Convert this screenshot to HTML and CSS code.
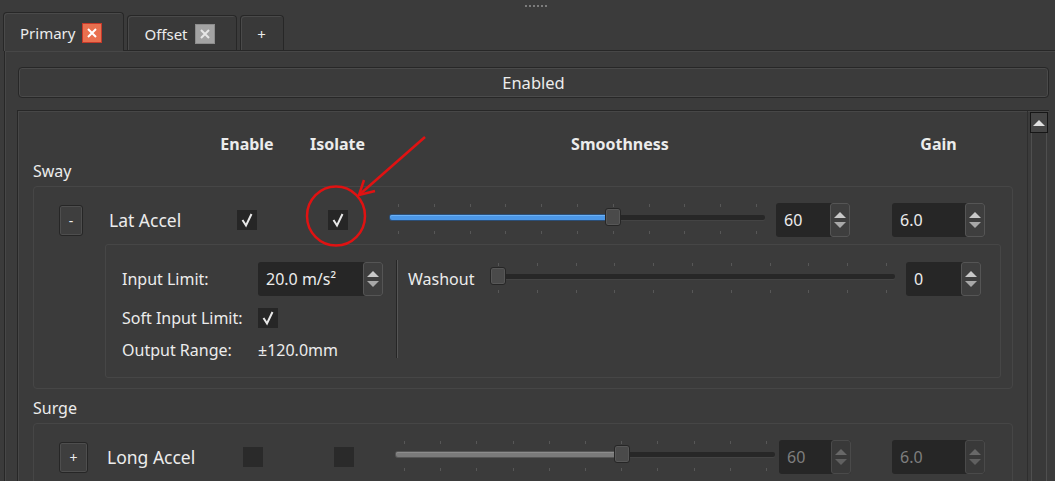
FILE: index.html
```html
<!DOCTYPE html>
<html lang="en">
<head>
    <meta charset="UTF-8">
    <title>Motion Filters</title>
    <link rel="stylesheet" href="styles.css">
</head>
<body>
    <div class="grip"><i></i><i></i><i></i><i></i><i></i><i></i></div>

    <div class="tabs">
        <div class="tab tab-active">
            <span>Primary</span>
            <svg class="tab-close" width="20" height="20" viewBox="0 0 20 20">
                <rect x="0.5" y="0.5" width="19" height="19" fill="#e9704f" stroke="#c6392a"/>
                <path d="M6 6 L14 14 M14 6 L6 14" stroke="#fff" stroke-width="2"/>
            </svg>
        </div>
        <div class="tab">
            <span>Offset</span>
            <svg class="tab-close" width="20" height="20" viewBox="0 0 20 20">
                <rect x="0.5" y="0.5" width="19" height="19" fill="#a3a3a3" stroke="#8c8c8c"/>
                <path d="M6 6 L14 14 M14 6 L6 14" stroke="#e6e6e6" stroke-width="2"/>
            </svg>
        </div>
        <div class="tab tab-add">+</div>
    </div>

    <div class="pane">
        <div class="toggle">Enabled</div>

        <div class="scroll-area">
            <div class="content">
                <div class="head">
                    <div class="c-btn"></div>
                    <div class="c-name"></div>
                    <div class="c-en">Enable</div>
                    <div class="c-iso">Isolate</div>
                    <div class="h-smooth">Smoothness</div>
                    <div class="c-gain">Gain</div>
                </div>

                <div class="section-label">Sway</div>
                <div class="group">
                    <div class="row">
                        <div class="c-btn"><div class="pm">-</div></div>
                        <div class="c-name">Lat Accel</div>
                        <div class="c-en"><div class="check"><svg width="20" height="20" viewBox="0 0 20 20"><path d="M5.5 10 L9 15.5 L14.5 4" fill="none" stroke="#e8e8e8" stroke-width="2"/></svg></div></div>
                        <div class="c-iso"><div class="check"><svg width="20" height="20" viewBox="0 0 20 20"><path d="M5.5 10 L9 15.5 L14.5 4" fill="none" stroke="#e8e8e8" stroke-width="2"/></svg></div></div>
                        <div class="c-slider">
                            <div class="slider">
                                <div class="ticks"><i></i><i></i><i></i><i></i><i></i><i></i><i></i><i></i><i></i><i></i><i></i></div>
                                <div class="groove">
                                    <div class="fill" style="width: calc((100% - 16px) * 0.6 + 8px)"></div>
                                    <div class="handle" style="left: calc((100% - 16px) * 0.6)"></div>
                                </div>
                                <div class="ticks"><i></i><i></i><i></i><i></i><i></i><i></i><i></i><i></i><i></i><i></i><i></i></div>
                            </div>
                        </div>
                        <div class="c-spin">
                            <div class="spin"><span class="spin-val">60</span><span class="spin-btns"><i class="up"></i><i class="down"></i></span></div>
                        </div>
                        <div class="c-gain">
                            <div class="spin"><span class="spin-val">6.0</span><span class="spin-btns"><i class="up"></i><i class="down"></i></span></div>
                        </div>
                    </div>

                    <div class="detail">
                        <div class="detail-left">
                            <div class="lrow lrow-first">
                                <span class="lbl">Input Limit:</span>
                                <div class="spin spin-wide"><span class="spin-val">20.0 m/s²</span><span class="spin-btns"><i class="up"></i><i class="down"></i></span></div>
                            </div>
                            <div class="lrow lrow-2">
                                <span class="lbl">Soft Input Limit:</span>
                                <div class="check"><svg width="20" height="20" viewBox="0 0 20 20"><path d="M5.5 10 L9 15.5 L14.5 4" fill="none" stroke="#e8e8e8" stroke-width="2"/></svg></div>
                            </div>
                            <div class="lrow lrow-3">
                                <span class="lbl">Output Range:</span>
                                <span>±120.0mm</span>
                            </div>
                        </div>
                        <div class="vsep"></div>
                        <div class="detail-right">
                            <span class="wash-lbl">Washout</span>
                            <div class="slider slider-wash">
                                <div class="ticks"><i></i><i></i><i></i><i></i><i></i><i></i><i></i><i></i><i></i><i></i><i></i></div>
                                <div class="groove">
                                    <div class="handle" style="left: 0"></div>
                                </div>
                                <div class="ticks"><i></i><i></i><i></i><i></i><i></i><i></i><i></i><i></i><i></i><i></i><i></i></div>
                            </div>
                            <div class="spin spin-wash"><span class="spin-val">0</span><span class="spin-btns"><i class="up"></i><i class="down"></i></span></div>
                        </div>
                    </div>
                </div>

                <div class="section-label section-label-2">Surge</div>
                <div class="group">
                    <div class="row row-wide row-off">
                        <div class="c-btn"><div class="pm">+</div></div>
                        <div class="c-name">Long Accel</div>
                        <div class="c-en"><div class="check"></div></div>
                        <div class="c-iso"><div class="check"></div></div>
                        <div class="c-slider">
                            <div class="slider">
                                <div class="ticks"><i></i><i></i><i></i><i></i><i></i><i></i><i></i><i></i><i></i><i></i><i></i></div>
                                <div class="groove">
                                    <div class="fill" style="width: calc((100% - 16px) * 0.6 + 8px)"></div>
                                    <div class="handle" style="left: calc((100% - 16px) * 0.6)"></div>
                                </div>
                                <div class="ticks"><i></i><i></i><i></i><i></i><i></i><i></i><i></i><i></i><i></i><i></i><i></i></div>
                            </div>
                        </div>
                        <div class="c-spin">
                            <div class="spin"><span class="spin-val">60</span><span class="spin-btns"><i class="up"></i><i class="down"></i></span></div>
                        </div>
                        <div class="c-gain">
                            <div class="spin"><span class="spin-val">6.0</span><span class="spin-btns"><i class="up"></i><i class="down"></i></span></div>
                        </div>
                    </div>
                </div>
            </div>

            <div class="scrollbar">
                <div class="sb-up"><i></i></div>
                <div class="sb-track"></div>
            </div>
        </div>
    </div>

    <!-- annotation drawn over the screenshot -->
    <svg class="markup" width="1055" height="481" viewBox="0 0 1055 481">
        <ellipse cx="336" cy="216" rx="29" ry="29.5" fill="none" stroke="#e01212" stroke-width="2.5"/>
        <path d="M425 137 L359 195" stroke="#e01212" stroke-width="2.5" fill="none"/>
        <path d="M375 191 L359 195 L364 180" stroke="#e01212" stroke-width="2.5" fill="none" stroke-linejoin="miter"/>
    </svg>
</body>
</html>
```

FILE: styles.css
```css
* {
    box-sizing: border-box;
}
html, body {
    margin: 0;
    height: 481px;
    overflow: hidden;
}
body {
    position: relative;
    background-color: #3b3b3b;
    color: #ececec;
    font-family: "Noto Sans", "Open Sans", sans-serif;
    font-size: 16px;
}

/* top grip */
.grip {
    height: 12px;
    display: flex;
    justify-content: center;
    align-items: center;
    gap: 2px;
    padding-left: 16px;
}
.grip i {
    width: 2px;
    height: 2px;
    background-color: #7c7c7c;
}

/* tabs */
.tabs {
    display: flex;
    align-items: flex-end;
    gap: 3px;
    height: 38px;
    padding-left: 3px;
    position: relative;
    z-index: 1;
    font-size: 15px;
}
.tab {
    display: flex;
    align-items: center;
    height: 35px;
    padding: 2px 21px 0 16px;
    border: 1px solid #272727;
    border-bottom: none;
    border-radius: 4px 4px 0 0;
    background-color: #393939;
    box-shadow: inset 1px 1px 0 #4a4a4a;
}
.tab-active {
    height: 39px;
    margin-bottom: -1px;
    background-color: #3b3b3b;
}
.tab-close {
    margin-left: 7px;
    display: block;
}
.tab-add {
    width: 44px;
    padding: 2px 0 0;
    justify-content: center;
}

.pane {
    margin-left: 4px;
    height: 431px;
    border-top: 1px solid #272727;
    border-left: 1px solid #272727;
    box-shadow: inset 1px 1px 0 #474747;
    padding: 16px 6px 0 13px;
}

.toggle {
    height: 31px;
    display: flex;
    align-items: center;
    justify-content: center;
    border: 1px solid #272727;
    border-radius: 4px;
    box-shadow: inset 0 0 0 1px #4a4a4a;
    font-size: 16.5px;
}

/* scrolling list */
.scroll-area {
    display: flex;
    margin: 12px 0 0 -1px;
    height: 400px;
    overflow: hidden;
    border: 1px solid #272727;
    border-right: none;
    border-bottom: none;
    box-shadow: inset 1px 1px 0 #474747;
}
.content {
    flex: 1;
    padding: 0 14px 0 15px;
}
.scrollbar {
    width: 22px;
    padding: 1px 1px 0 2px;
    border-left: 1px solid #2e2e2e;
    display: flex;
    flex-direction: column;
}
.sb-up {
    height: 21px;
    border: 1px solid #161616;
    background-color: #454545;
    display: flex;
    align-items: center;
    justify-content: center;
}
.sb-up i {
    width: 0;
    height: 0;
    border-left: 6px solid transparent;
    border-right: 6px solid transparent;
    border-bottom: 6px solid #e0e0e0;
}
.sb-track {
    flex: 1;
    margin: 0 1px;
    border-left: 1px solid #4f4f4f;
    border-right: 1px solid #4f4f4f;
    background-color: #393939;
}

.head {
    display: flex;
    height: 20px;
    line-height: 20px;
    margin-top: 23px;
    padding-left: 1px;
    font-weight: 700;
    text-align: center;
}
.h-smooth {
    width: 460px;
}

.section-label {
    height: 20px;
    line-height: 20px;
    margin-top: 7px;
}
.section-label-2 {
    margin-top: 9px;
}

.group {
    margin-top: 5px;
    border: 1px solid #464646;
    border-radius: 4px;
    padding: 16px 11px 10px 0;
}

/* row cells */
.row {
    display: flex;
    align-items: center;
    height: 34px;
}
.c-btn {
    width: 24px;
    margin-left: 25px;
}
.c-name {
    width: 100px;
    margin-left: 26px;
    text-align: left;
    font-size: 17.5px;
    white-space: nowrap;
}
.c-en {
    width: 76px;
}
.c-iso {
    width: 105px;
}
.c-slider {
    width: 375px;
}
.c-spin {
    width: 74px;
    margin-left: 11px;
}
.c-gain {
    width: 93px;
    margin-left: 42px;
}
.row-wide .c-btn {
    width: 29px;
}
.row-wide .c-name {
    width: 108px;
    margin-left: 19px;
}
.row-wide .c-slider {
    width: 379px;
}
.row-wide .c-spin {
    width: 72px;
    margin-left: 4px;
}
.row-wide .c-gain {
    margin-left: 41px;
}

.pm {
    height: 31px;
    display: flex;
    align-items: center;
    justify-content: center;
    border: 1px solid #262626;
    border-radius: 3px;
    background-color: #3e3e3e;
    box-shadow: inset 0 0 0 1px #4e4e4e;
    font-size: 14px;
}

.check {
    width: 20px;
    height: 20px;
    margin: 0 auto;
    background-color: #262626;
}
.check svg {
    display: block;
}
.row-off .check {
    background-color: #2a2a2a;
}

/* slider */
.slider {
    height: 34px;
    position: relative;
}
.ticks {
    display: flex;
    justify-content: space-between;
    padding: 0 8px;
    height: 3px;
    margin-top: 1px;
}
.ticks i {
    width: 1px;
    height: 3px;
    background-color: #575757;
}
.groove {
    position: relative;
    height: 5px;
    margin: 8px 0 11px;
    background-color: #272727;
    border-radius: 2px;
    box-shadow: 0 1px 0 #444;
}
.fill {
    height: 5px;
    border-radius: 2px;
    background-color: #4c97e6;
    box-shadow: inset 0 1px 0 #6cb1f5, 0 0 0 1px #2b4f78;
}
.row-off .fill {
    background-color: #7a7a7a;
    box-shadow: inset 0 1px 0 #8c8c8c, 0 0 0 1px #555;
}
.handle {
    position: absolute;
    top: -7px;
    width: 16px;
    height: 18px;
    border: 1px solid #262626;
    border-radius: 3px;
    background-color: #4a4a4a;
    box-shadow: inset 0 0 0 1px #575757;
}

/* spin box */
.spin {
    display: flex;
    height: 34px;
    background-color: #262626;
    border-radius: 3px;
}
.spin-val {
    flex: 1;
    display: flex;
    align-items: center;
    padding-left: 8px;
    white-space: nowrap;
}
.spin-btns {
    width: 20px;
    display: flex;
    flex-direction: column;
    align-items: center;
    justify-content: center;
    gap: 4px;
    border: 1px solid #555;
    border-radius: 3px;
    background-color: #3e3e3e;
}
.spin-btns i {
    width: 0;
    height: 0;
    border-left: 6px solid transparent;
    border-right: 6px solid transparent;
}
.spin-btns .up {
    border-bottom: 6px solid #c8c8c8;
}
.spin-btns .down {
    border-top: 6px solid #a8a8a8;
}
.row-off .spin-val {
    color: #7e7e7e;
}
.row-off .spin-btns {
    border-color: #4a4a4a;
    background-color: #393939;
}
.row-off .spin-btns .up {
    border-bottom-color: #686868;
}
.row-off .spin-btns .down {
    border-top-color: #606060;
}

/* detail box */
.detail {
    display: flex;
    height: 134px;
    margin: 7px 0 0 71px;
    padding: 17px 0 0 16px;
    border: 1px solid #464646;
    border-radius: 3px;
}
.detail-left {
    width: 261px;
}
.lrow {
    display: flex;
    align-items: center;
    height: 24px;
}
.lrow-first {
    height: 34px;
}
.lrow-2 {
    margin-top: 10px;
}
.lrow-3 {
    margin-top: 8px;
}
.lbl {
    width: 136px;
    white-space: nowrap;
}
.lrow .check {
    margin: 0;
}
.spin-wide {
    width: 125px;
}
.vsep {
    width: 2px;
    height: 98px;
    margin: -2px 0 0 13px;
    border-left: 1px solid #262626;
    border-right: 1px solid #555;
}
.detail-right {
    display: flex;
    align-items: center;
    height: 34px;
    margin-left: 10px;
}
.wash-lbl {
    width: 82px;
}
.slider-wash {
    width: 405px;
}
.spin-wash {
    width: 75px;
    margin-left: 11px;
}

.markup {
    position: absolute;
    left: 0;
    top: 0;
    pointer-events: none;
}
```
